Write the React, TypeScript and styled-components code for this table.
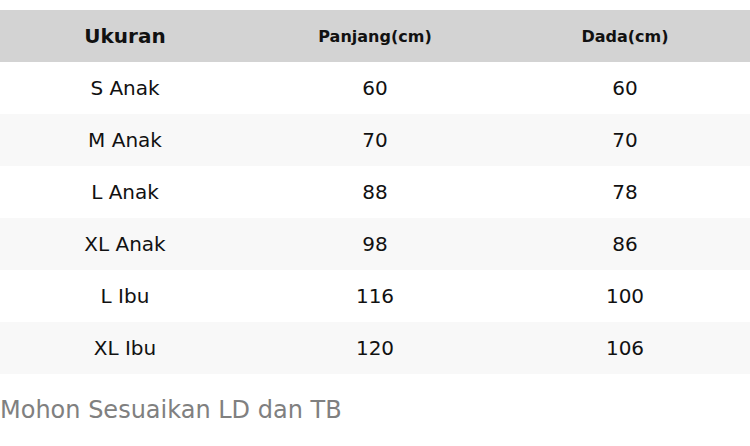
import React from 'react'
import styled, { createGlobalStyle } from 'styled-components'

const GlobalStyle = createGlobalStyle`
  body {
    margin: 0;
    background: #ffffff;
    font-family: "DejaVu Sans", sans-serif;
    color: #111111;
  }
`

const Page = styled.div`
  padding-top: 10px;
  width: 750px;
`

const SizeTable = styled.table`
  width: 100%;
  border-collapse: collapse;
  table-layout: fixed;
`

const HeadCell = styled.th<{ $small?: boolean }>`
  height: 52px;
  padding: 0;
  background: #d3d3d3;
  font-weight: 700;
  font-size: ${props => (props.$small ? '16px' : '20px')};
  text-align: center;
  vertical-align: middle;
  color: #111111;
`

const Row = styled.tr<{ $striped: boolean }>`
  background: ${props => (props.$striped ? '#f8f8f8' : '#ffffff')};
`

const Cell = styled.td`
  height: 52px;
  padding: 0;
  font-size: 20px;
  text-align: center;
  vertical-align: middle;
`

const Note = styled.p`
  margin: 22px 0 0;
  font-size: 24px;
  color: #808080;
`

const sizes = [
  { name: 'S Anak', length: 60, chest: 60 },
  { name: 'M Anak', length: 70, chest: 70 },
  { name: 'L Anak', length: 88, chest: 78 },
  { name: 'XL Anak', length: 98, chest: 86 },
  { name: 'L Ibu', length: 116, chest: 100 },
  { name: 'XL Ibu', length: 120, chest: 106 },
]

export default function App() {
  return (
    <>
      <GlobalStyle />
      <Page>
        <SizeTable>
          <thead>
            <tr>
              <HeadCell>Ukuran</HeadCell>
              <HeadCell $small>Panjang(cm)</HeadCell>
              <HeadCell $small>Dada(cm)</HeadCell>
            </tr>
          </thead>
          <tbody>
            {sizes.map((s, i) => (
              <Row key={s.name} $striped={i % 2 === 1}>
                <Cell>{s.name}</Cell>
                <Cell>{s.length}</Cell>
                <Cell>{s.chest}</Cell>
              </Row>
            ))}
          </tbody>
        </SizeTable>
        <Note>Mohon Sesuaikan LD dan TB</Note>
      </Page>
    </>
  )
}
